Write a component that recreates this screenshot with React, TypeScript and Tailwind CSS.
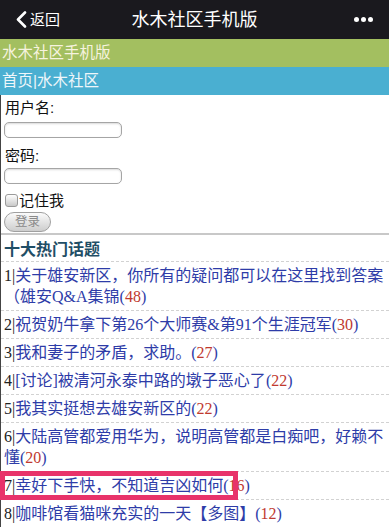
import React from "react";

type Topic = { n: number; title: string; count: number; boxed?: boolean };

const topics: Topic[] = [
  { n: 1, title: "关于雄安新区，你所有的疑问都可以在这里找到答案（雄安Q&A集锦", count: 48 },
  { n: 2, title: "祝贺奶牛拿下第26个大师赛&第91个生涯冠军", count: 30 },
  { n: 3, title: "我和妻子的矛盾，求助。", count: 27 },
  { n: 4, title: "[讨论]被清河永泰中路的墩子恶心了", count: 22 },
  { n: 5, title: "我其实挺想去雄安新区的", count: 22 },
  { n: 6, title: "大陆高管都爱用华为，说明高管都是白痴吧，好赖不懂", count: 20 },
  { n: 7, title: "幸好下手快，不知道吉凶如何", count: 16, boxed: true },
  { n: 8, title: "咖啡馆看猫咪充实的一天【多图】", count: 12 },
];

function TopicRow({ t }: { t: Topic }) {
  const countStr = String(t.count);
  if (t.boxed) {
    return (
      <li className="pl-[3px] pt-[3px] pb-[3px] leading-[21px] border-b border-dashed border-[#d2d2d2]">
        <span className="relative">
          <span className="text-[#222]">{t.n}|</span>
          <span className="text-[#2e3ca8]">{t.title}(</span>
          <span className="text-[#c0392f]">{countStr[0]}</span>
          <span className="absolute left-[-4px] right-[-1px] top-[-6px] bottom-[-6px] border-[5px] border-[#e8336a]" />
        </span>
        <span className="text-[#c0392f]">{countStr.slice(1)}</span>
        <span className="text-[#2e3ca8]">)</span>
      </li>
    );
  }
  return (
    <li className="pl-[3px] pt-[3px] pb-[3px] leading-[21px] border-b border-dashed border-[#d2d2d2]">
      <span className="text-[#222]">{t.n}|</span>
      <span className="text-[#2e3ca8]">{t.title}(</span>
      <span className="text-[#c0392f]">{countStr}</span>
      <span className="text-[#2e3ca8]">)</span>
    </li>
  );
}

export default function App() {
  return (
    <div className="w-[389px] h-[527px] overflow-hidden bg-white font-['Liberation_Sans','Noto_Sans_CJK_SC',sans-serif]">
      {/* top nav bar */}
      <div className="h-[39px] bg-[#1a191e] grid grid-cols-[1fr_auto_1fr] items-center text-white">
        <div className="flex items-center pl-[15px] gap-[3px]">
          <svg width="12" height="17" viewBox="0 0 12 17" fill="none">
            <path d="M10 1.5 L3 8.5 L10 15.5" stroke="white" strokeWidth="2.6" strokeLinecap="round" strokeLinejoin="round" />
          </svg>
          <span className="text-[15px] leading-none">返回</span>
        </div>
        <div className="text-[18px] leading-none tracking-[0px]">水木社区手机版</div>
        <div className="flex justify-end items-center gap-[2px] pr-[16px]">
          <span className="w-[5px] h-[5px] rounded-full bg-white" />
          <span className="w-[5px] h-[5px] rounded-full bg-white" />
          <span className="w-[5px] h-[5px] rounded-full bg-white" />
        </div>
      </div>

      {/* green header */}
      <div className="h-[28px] bg-[#a3bf60] text-[#f6f3df] text-[15.5px] leading-[28px] pl-[2px]">
        水木社区手机版
      </div>
      {/* blue breadcrumb */}
      <div className="h-[28px] bg-[#4aafd1] text-[#eef6fa] text-[15.5px] leading-[28px] pl-[2px]">
        首页|水木社区
      </div>

      {/* content */}
      <div className="border-l border-[#444] h-full">
        <div className="px-[3px] pt-[2px] text-[15px] text-[#111]">
          <div className="leading-[21px] pl-[1px]">用户名:</div>
          <div className="mt-[4px] w-[118px] h-[16px] rounded-[5px] border border-[#a5a5a5] bg-white shadow-[inset_0_1px_2px_rgba(0,0,0,0.15)]" />
          <div className="mt-[7px] leading-[21px] pl-[1px]">密码:</div>
          <div className="mt-[2px] w-[118px] h-[16px] rounded-[5px] border border-[#a5a5a5] bg-white shadow-[inset_0_1px_2px_rgba(0,0,0,0.15)]" />
          <div className="mt-[6px] flex items-center leading-[21px]">
            <span className="ml-[1px] w-[13px] h-[13px] rounded-[3px] border border-[#9a9a9a] bg-gradient-to-b from-[#ffffff] to-[#c9c9c9]" />
            <span className="ml-[1px]">记住我</span>
          </div>
          <div className="mt-[1px] w-[47px] h-[20px] rounded-full border border-[#a0a0a0] bg-gradient-to-b from-[#fbfbfb] to-[#cdcdcd] flex items-center justify-center text-[12.5px] text-[#8a8a8a]">
            登录
          </div>
        </div>
        <div className="mt-[1px] border-b-2 border-[#c8c8c8]" />

        <div className="pl-[3px] pt-[4px] pb-[1px] leading-[21px] text-[16px] font-bold text-[#1f4e66] border-b border-dashed border-[#d2d2d2]">
          十大热门话题
        </div>
        <ul className="text-[16px] font-['Liberation_Serif','Noto_Sans_CJK_SC',serif]">
          {topics.map((t) => (
            <TopicRow key={t.n} t={t} />
          ))}
        </ul>
      </div>
    </div>
  );
}
